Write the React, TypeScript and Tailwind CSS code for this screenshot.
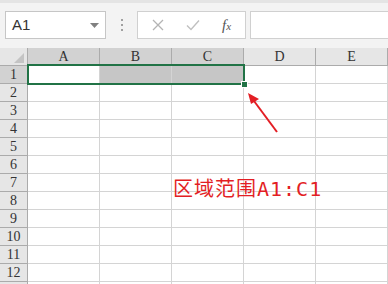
import React from 'react';

const COLS = ['A', 'B', 'C', 'D', 'E'];
const ROWS = Array.from({ length: 13 }, (_, i) => i + 1);

function Toolbar() {
  return (
    <div className="h-[48px] bg-[#f3f3f3] border-t-[3px] border-[#e4e4e4] flex items-start pt-[8px] pl-[5px]">
      {/* name box */}
      <div className="w-[101px] h-[28px] bg-white border border-[#c6c6c6] flex items-center justify-between pl-[6px] pr-[6px]">
        <span className="text-[15px] text-[#333] font-['Liberation_Sans',sans-serif]">A1</span>
        <svg width="9" height="5" viewBox="0 0 9 5">
          <path d="M0 0 L9 0 L4.5 5 Z" fill="#808080" />
        </svg>
      </div>
      {/* drag dots */}
      <div className="w-[31px] h-[28px] flex flex-col items-center justify-center gap-[3px]">
        <span className="w-[2px] h-[2px] bg-[#a0a0a0]" />
        <span className="w-[2px] h-[2px] bg-[#a0a0a0]" />
        <span className="w-[2px] h-[2px] bg-[#a0a0a0]" />
      </div>
      {/* cancel / enter / fx */}
      <div className="w-[109px] h-[28px] bg-white border border-[#d0d0d0] flex items-center">
        <svg className="ml-[14px]" width="12" height="12" viewBox="0 0 12 12">
          <path d="M1 1 L11 11 M11 1 L1 11" stroke="#b4b4b4" strokeWidth="1.3" />
        </svg>
        <svg className="ml-[22px]" width="14" height="12" viewBox="0 0 14 12">
          <path d="M1 6.5 L5 10.5 L13 1.5" stroke="#c0c0c0" strokeWidth="1.4" fill="none" />
        </svg>
        <span className="ml-[22px] text-[15px] italic text-[#555] font-['Liberation_Serif',serif] leading-none">
          f<span className="text-[11px]">x</span>
        </span>
      </div>
      <div className="w-[4px]" />
      <div className="flex-1 h-[28px] bg-white border border-[#d0d0d0] border-r-0" />
    </div>
  );
}

export default function App() {
  return (
    <div className="w-[388px] h-[284px] overflow-hidden bg-white relative font-['Liberation_Serif',serif]">
      <Toolbar />
      <div className="grid grid-cols-[28px_repeat(5,72px)] auto-rows-[18px]">
        {/* corner */}
        <div className="bg-[#e6e6e6] border-r border-b border-[#ababab] flex items-end justify-end pr-[3px] pb-[2px]">
          <svg width="10" height="10" viewBox="0 0 10 10">
            <path d="M10 0 L10 10 L0 10 Z" fill="#c4c4c4" />
          </svg>
        </div>
        {COLS.map((c, i) => (
          <div
            key={c}
            className={`${i < 3 ? 'bg-[#d2d2d2]' : 'bg-[#e6e6e6]'} border-r border-b border-[#ababab] flex items-center justify-center text-[14px] text-[#333] leading-none pt-[1px]`}
          >
            {c}
          </div>
        ))}
        {ROWS.map((r) => (
          <React.Fragment key={r}>
            <div
              className={`${r === 1 ? 'bg-[#d2d2d2]' : 'bg-[#e6e6e6]'} border-r border-b border-[#ababab] flex items-center justify-center text-[14px] text-[#333] leading-none`}
            >
              {r < 13 ? r : ''}
            </div>
            {COLS.map((c, i) => (
              <div
                key={c}
                className={`${r === 1 && (i === 1 || i === 2) ? 'bg-[#c6c6c6]' : 'bg-white'} border-r border-b border-[#d4d4d4]`}
              />
            ))}
          </React.Fragment>
        ))}
      </div>

      {/* selection A1:C1 */}
      <div className="absolute left-[27px] top-[64px] w-[218px] h-[21px] border-2 border-[#217346]" />
      <div className="absolute left-[241px] top-[81px] w-[7px] h-[7px] bg-[#217346] border border-white" />

      {/* arrow */}
      <svg className="absolute left-0 top-0" width="388" height="284" viewBox="0 0 388 284">
        <line x1="277" y1="132" x2="254" y2="101" stroke="#e31e24" strokeWidth="2" />
        <path d="M248 93 L259 99 L251 104 Z" fill="#e31e24" />
      </svg>

      {/* annotation */}
      <div className="absolute left-[173px] top-[175px] text-[20px] leading-[28px] text-[#e31e24] tracking-[1px] whitespace-nowrap font-['DejaVu_Sans_Mono','Noto_Sans_CJK_SC',monospace]">
        区域范围A1:C1
      </div>
    </div>
  );
}
